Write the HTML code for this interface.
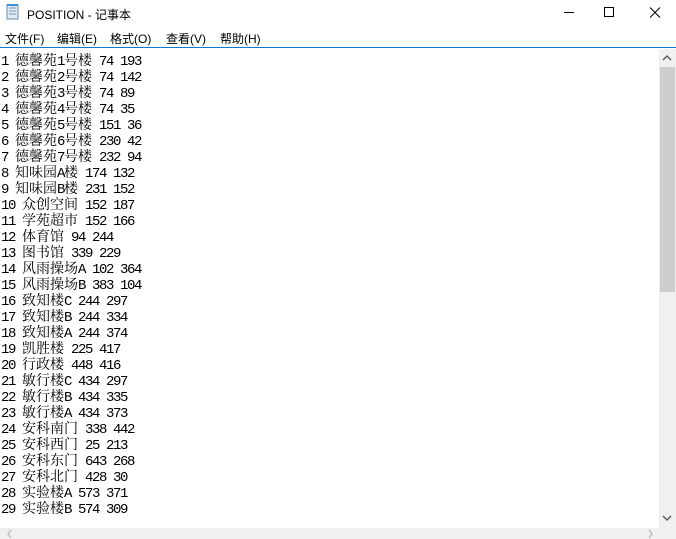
<!DOCTYPE html>
<html><head><meta charset="utf-8"><style>
*{margin:0;padding:0;box-sizing:border-box}
body{width:676px;height:539px;overflow:hidden;background:#fff;position:relative;font-family:"Liberation Sans","Noto Sans CJK SC",sans-serif}
.title{position:absolute;left:0;top:0;width:676px;height:29px;background:#fff}
.title .t{position:absolute;left:27px;top:6px;font-size:12px;color:#000}
.menu{position:absolute;left:0;top:29px;height:19px;width:676px;font-size:12px}
.menu span{position:absolute;top:1px}
.line{position:absolute;left:0;top:47px;width:676px;height:1px;background:#0a78d7}
.txt{position:absolute;left:1px;top:52px;width:650px;height:476px;overflow:hidden;font-family:"Liberation Mono",monospace;font-size:14px;letter-spacing:-1.4px;color:#000}
.txt div{height:16px;line-height:16px;white-space:pre;overflow:visible}
.txt b{font-weight:normal;font-family:"Noto Serif CJK SC","Noto Sans CJK SC",serif;font-size:14px;letter-spacing:0;line-height:16px}
.vs{position:absolute;left:659px;top:49px;width:17px;height:479px;background:#f0f0f0}
.thumb{position:absolute;left:660px;top:67px;width:15px;height:225px;background:#cdcdcd}
.hs{position:absolute;left:0;top:528px;width:659px;height:11px;background:#f0f0f0}
.corner{position:absolute;left:659px;top:528px;width:17px;height:11px;background:#f0f0f0}
</style></head><body>
<div class="title">
<svg style="position:absolute;left:6px;top:4px" width="14" height="16"><rect x="1" y="1" width="11" height="14" fill="#dfeaf3" stroke="#6a8aa8"/><line x1="3" y1="4" x2="10" y2="4" stroke="#7a9ab8"/><line x1="3" y1="7" x2="10" y2="7" stroke="#7a9ab8"/><line x1="3" y1="10" x2="10" y2="10" stroke="#7a9ab8"/><rect x="1" y="0" width="11" height="2" fill="#3b8fd6"/></svg>
<span class="t">POSITION - 记事本</span>
<svg style="position:absolute;left:560px;top:6px" width="110" height="14"><line x1="4" y1="6.5" x2="14" y2="6.5" stroke="#000"/><rect x="44.5" y="1.5" width="9" height="9" fill="none" stroke="#000"/><path d="M90 1.5L100 11.5M100 1.5L90 11.5" stroke="#000"/></svg>
</div>
<div class="menu"><span style="left:5px">文件(F)</span><span style="left:57px">编辑(E)</span><span style="left:110px">格式(O)</span><span style="left:166px">查看(V)</span><span style="left:220px">帮助(H)</span></div>
<div class="line"></div>
<div class="txt">
<div>1 <b>德馨苑</b>1<b>号楼</b> 74 193</div>
<div>2 <b>德馨苑</b>2<b>号楼</b> 74 142</div>
<div>3 <b>德馨苑</b>3<b>号楼</b> 74 89</div>
<div>4 <b>德馨苑</b>4<b>号楼</b> 74 35</div>
<div>5 <b>德馨苑</b>5<b>号楼</b> 151 36</div>
<div>6 <b>德馨苑</b>6<b>号楼</b> 230 42</div>
<div>7 <b>德馨苑</b>7<b>号楼</b> 232 94</div>
<div>8 <b>知味园</b>A<b>楼</b> 174 132</div>
<div>9 <b>知味园</b>B<b>楼</b> 231 152</div>
<div>10 <b>众创空间</b> 152 187</div>
<div>11 <b>学苑超市</b> 152 166</div>
<div>12 <b>体育馆</b> 94 244</div>
<div>13 <b>图书馆</b> 339 229</div>
<div>14 <b>风雨操场</b>A 102 364</div>
<div>15 <b>风雨操场</b>B 383 104</div>
<div>16 <b>致知楼</b>C 244 297</div>
<div>17 <b>致知楼</b>B 244 334</div>
<div>18 <b>致知楼</b>A 244 374</div>
<div>19 <b>凯胜楼</b> 225 417</div>
<div>20 <b>行政楼</b> 448 416</div>
<div>21 <b>敏行楼</b>C 434 297</div>
<div>22 <b>敏行楼</b>B 434 335</div>
<div>23 <b>敏行楼</b>A 434 373</div>
<div>24 <b>安科南门</b> 338 442</div>
<div>25 <b>安科西门</b> 25 213</div>
<div>26 <b>安科东门</b> 643 268</div>
<div>27 <b>安科北门</b> 428 30</div>
<div>28 <b>实验楼</b>A 573 371</div>
<div>29 <b>实验楼</b>B 574 309</div>
</div>
<div class="vs"></div><div class="thumb"></div>
<svg style="position:absolute;left:662px;top:54px" width="10" height="8"><path d="M1 6L5 2L9 6" fill="none" stroke="#606060" stroke-width="1.5"/></svg>
<svg style="position:absolute;left:662px;top:514px" width="10" height="8"><path d="M1 2L5 6L9 2" fill="none" stroke="#606060" stroke-width="1.5"/></svg>
<div class="hs"></div><div class="corner"></div>
<svg style="position:absolute;left:6px;top:529px" width="8" height="10"><path d="M5 1L2 5L5 9" fill="none" stroke="#c0c0c0" stroke-width="1.5"/></svg>
<svg style="position:absolute;left:647px;top:529px" width="8" height="10"><path d="M2 1L5 5L2 9" fill="none" stroke="#c0c0c0" stroke-width="1.5"/></svg>
</body></html>
